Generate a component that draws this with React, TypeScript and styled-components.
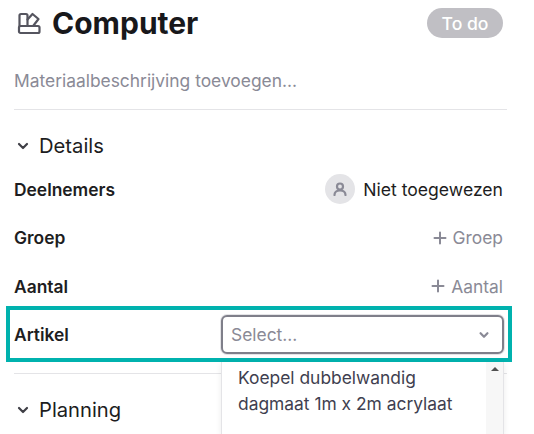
import styled, { createGlobalStyle } from 'styled-components';

// styles
const GlobalStyle = createGlobalStyle`
  html, body {
    margin: 0;
    padding: 0;
    background: #fff;
    overflow: hidden;
  }
  body {
    font-family: Inter, "Noto Sans", sans-serif;
    color: #1d1d21;
  }
`;

const Page = styled.div`
  position: relative;
  width: 534px;
  height: 434px;
  overflow: hidden;
  box-sizing: border-box;
  padding: 0 27px 0 14px;
`;

const Header = styled.header`
  display: flex;
  align-items: center;
  height: 46px;
  padding: 0 4px 0 3px;
`;

const Title = styled.h1`
  flex: 1;
  margin: 0 0 0 11px;
  font-size: 30px;
  line-height: 46px;
  font-weight: 700;
  color: #18181b;
`;

const Badge = styled.span`
  display: flex;
  align-items: center;
  justify-content: center;
  width: 76px;
  height: 30px;
  border-radius: 15px;
  background: #c0bfc4;
  color: #fff;
  font-size: 17.6px;
  font-weight: 500;
`;

const Description = styled.p`
  margin: 0;
  padding-top: 24px;
  height: 39px;
  line-height: 22px;
  font-size: 17.4px;
  color: #8a8a96;
`;

const Divider = styled.hr`
  margin: 0;
  border: 0;
  border-top: 1px solid #e4e4e7;
`;

const SectionTitle = styled.div`
  display: flex;
  align-items: center;
  gap: 9px;
  padding-left: 2px;
  height: 24px;
  font-size: 20.2px;
  line-height: 24px;
  color: #1d1d21;
`;

const Block = styled.section`
  padding-top: 24px;
`;

const Rows = styled.div`
  padding-top: 7px;
`;

const Row = styled.div`
  display: flex;
  align-items: center;
  justify-content: space-between;
  height: 48.5px;
  padding-right: 4px;
`;

const Label = styled.span`
  font-size: 17.4px;
  font-weight: 600;
`;

const Assignee = styled.span`
  display: flex;
  align-items: center;
  gap: 8px;
  font-size: 17.6px;
`;

const Avatar = styled.span`
  display: flex;
  align-items: center;
  justify-content: center;
  width: 30px;
  height: 30px;
  border-radius: 50%;
  background: #e4e4e7;
  color: #8a8a96;
`;

const AddValue = styled.span`
  display: flex;
  align-items: center;
  gap: 6px;
  font-size: 17.4px;
  color: #8a8a96;
`;

const SelectBox = styled.div`
  display: flex;
  align-items: center;
  justify-content: space-between;
  box-sizing: border-box;
  width: 283px;
  height: 39px;
  margin-right: -1px;
  padding: 0 12px 0 8px;
  border: 2px solid #7f7f8a;
  border-radius: 6px;
  font-size: 17.4px;
  color: #8a8a96;
  background: #fff;
  box-shadow: 0 0 0 1px #e4e4e7;
`;

const ArtikelRow = styled(Row)`
  margin-bottom: 14px;
`;

const Highlight = styled.div`
  position: absolute;
  left: 6px;
  top: 306px;
  box-sizing: border-box;
  width: 506px;
  height: 56px;
  border: 4px solid #00b2ae;
  pointer-events: none;
`;

const Dropdown = styled.div`
  position: absolute;
  left: 221px;
  top: 362px;
  box-sizing: border-box;
  width: 283px;
  height: 72px;
  padding: 3px 18px 0 16px;
  border-left: 1px solid #e4e4e7;
  border-right: 1px solid #e4e4e7;
  background: #fff;
  box-shadow: 0 2px 6px rgba(0, 0, 0, 0.08);
  font-size: 17.4px;
  line-height: 26px;
  color: #3f3f50;
`;

const Scrollbar = styled.div`
  position: absolute;
  right: 0;
  top: 0;
  bottom: 0;
  width: 17px;
  background: #f7f7f7;
  display: flex;
  justify-content: center;
  padding-top: 5px;
  box-sizing: border-box;
`;

const ScrollArrow = styled.span`
  width: 0;
  height: 0;
  border-left: 4px solid transparent;
  border-right: 4px solid transparent;
  border-bottom: 4px solid #505050;
`;

// icons
function MaterialIcon() {
  return (
    <svg width="24" height="24" viewBox="0 0 24 24" fill="none" stroke="#55555f" strokeWidth="2.2" strokeLinejoin="round" strokeLinecap="round">
      <path d="M2.500 15V4.500A1.500 1.500 0 0 1 4 3h5a1.500 1.500 0 0 1 1.500 1.500V15" />
      <rect x="2" y="15" width="20.500" height="7" rx="1.500" />
      <path d="M10.500 8.500L15.500 3l6 5-5 6.500" />
    </svg>
  );
}

function Chevron({ color = '#3f3f46', size = 14, weight = 2.2 }: { color?: string; size?: number; weight?: number }) {
  return (
    <svg width={size} height={size} viewBox="0 0 14 14" fill="none" stroke={color} strokeWidth={weight} strokeLinecap="round" strokeLinejoin="round">
      <path d="M3 5l4 4 4-4" />
    </svg>
  );
}

function Plus() {
  return (
    <svg width="14" height="14" viewBox="0 0 14 14" fill="none" stroke="#8a8a96" strokeWidth="2" strokeLinecap="round">
      <path d="M7 1.500v11M1.500 7h11" />
    </svg>
  );
}

function Person() {
  return (
    <svg width="14" height="14" viewBox="0 0 14 14" fill="none" stroke="currentColor" strokeWidth="2.2" strokeLinecap="round">
      <circle cx="7" cy="4.500" r="3" />
      <path d="M1.500 13c0-3 2.200-4.500 5.500-4.500s5.500 1.500 5.500 4.500" />
    </svg>
  );
}

// component
export default function App() {
  return (
    <Page>
      <GlobalStyle />
      <Header>
        <MaterialIcon />
        <Title>Computer</Title>
        <Badge>To do</Badge>
      </Header>
      <Description>Materiaalbeschrijving toevoegen...</Description>
      <Divider />
      <Block>
        <SectionTitle>
          <Chevron />
          Details
        </SectionTitle>
        <Rows>
          <Row>
            <Label>Deelnemers</Label>
            <Assignee>
              <Avatar><Person /></Avatar>
              Niet toegewezen
            </Assignee>
          </Row>
          <Row>
            <Label>Groep</Label>
            <AddValue><Plus />Groep</AddValue>
          </Row>
          <Row>
            <Label>Aantal</Label>
            <AddValue><Plus />Aantal</AddValue>
          </Row>
          <ArtikelRow>
            <Label>Artikel</Label>
            <SelectBox>
              Select...
              <Chevron color="#8a8a96" size={12} weight={2.6} />
            </SelectBox>
          </ArtikelRow>
        </Rows>
      </Block>
      <Divider />
      <Block>
        <SectionTitle>
          <Chevron />
          Planning
        </SectionTitle>
      </Block>
      <Highlight />
      <Dropdown>
        Koepel dubbelwandig<br />dagmaat 1m x 2m acrylaat
        <Scrollbar><ScrollArrow /></Scrollbar>
      </Dropdown>
    </Page>
  );
}
